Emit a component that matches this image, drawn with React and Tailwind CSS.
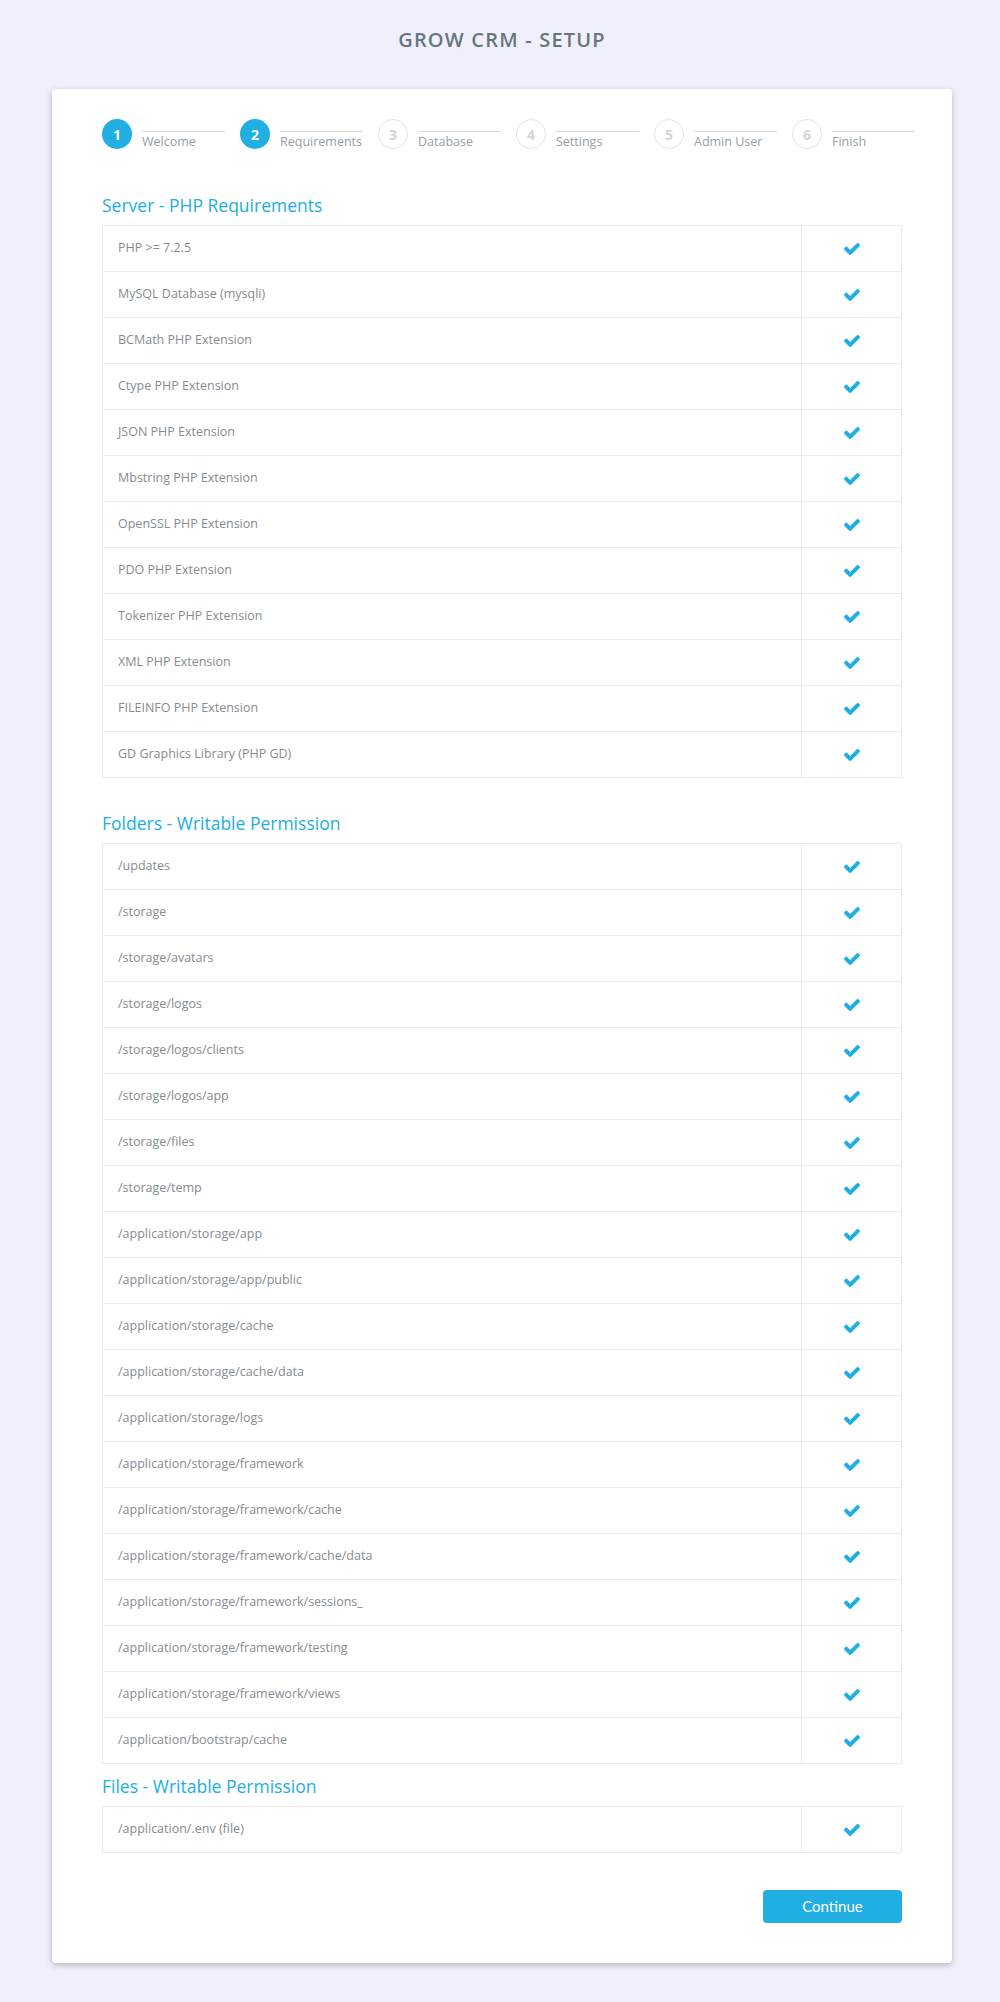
import React from 'react';

const steps = [
  { n: 1, label: 'Welcome', done: true },
  { n: 2, label: 'Requirements', done: true },
  { n: 3, label: 'Database' },
  { n: 4, label: 'Settings' },
  { n: 5, label: 'Admin User' },
  { n: 6, label: 'Finish' },
];

const serverReqs = [
  'PHP >= 7.2.5',
  'MySQL Database (mysqli)',
  'BCMath PHP Extension',
  'Ctype PHP Extension',
  'JSON PHP Extension',
  'Mbstring PHP Extension',
  'OpenSSL PHP Extension',
  'PDO PHP Extension',
  'Tokenizer PHP Extension',
  'XML PHP Extension',
  'FILEINFO PHP Extension',
  'GD Graphics Library (PHP GD)',
];

const folders = [
  '/updates',
  '/storage',
  '/storage/avatars',
  '/storage/logos',
  '/storage/logos/clients',
  '/storage/logos/app',
  '/storage/files',
  '/storage/temp',
  '/application/storage/app',
  '/application/storage/app/public',
  '/application/storage/cache',
  '/application/storage/cache/data',
  '/application/storage/logs',
  '/application/storage/framework',
  '/application/storage/framework/cache',
  '/application/storage/framework/cache/data',
  '/application/storage/framework/sessions_',
  '/application/storage/framework/testing',
  '/application/storage/framework/views',
  '/application/bootstrap/cache',
];

const files = ['/application/.env (file)'];

// font-awesome 4 style check mark
const Check = () => (
  <svg width="16" height="12" viewBox="121 400 1550 1060" fill="#20aee3">
    <path d="M1671 566q0 40-28 68l-724 724-136 136q-28 28-68 28t-68-28l-136-136-362-362q-28-28-28-68t28-68l136-136q28-28 68-28t68 28l294 295 656-657q28-28 68-28t68 28l136 136q28 28 28 68z" />
  </svg>
);

const Stepper = () => (
  <div className="flex h-[30px]">
    {steps.map((s) => (
      <div key={s.n} className="flex w-[138px] shrink-0">
        {s.done ? (
          <div className="w-[30px] h-[30px] rounded-full bg-[#20aee3] text-white text-[14px] font-bold flex items-center justify-center shrink-0">
            {s.n}
          </div>
        ) : (
          <div className="w-[30px] h-[30px] rounded-full border border-[#e3e3e3] bg-white text-[#d4d4d4] text-[14px] font-bold flex items-center justify-center shrink-0">
            {s.n}
          </div>
        )}
        <div className="ml-[10px] w-[83px] pt-[12px]">
          <div className="border-t border-[#d9d9d9]"></div>
          <div className="text-[12.5px] leading-[16px] text-[#939ea7] whitespace-nowrap mt-[2px]">{s.label}</div>
        </div>
      </div>
    ))}
  </div>
);

const CheckTable = ({ rows }) => (
  <div className="border-x border-b border-[#e9ebee]">
    {rows.map((r) => (
      <div key={r} className="flex h-[46px] border-t border-[#e9ebee]">
        <div className="flex-1 flex items-center pl-[15px] text-[12.5px] text-[#858b92]">{r}</div>
        <div className="w-[100px] border-l border-[#e9ebee] flex items-center justify-center">
          <Check />
        </div>
      </div>
    ))}
  </div>
);

const SectionTitle = ({ children, className = '' }) => (
  <h3 className={`text-[17.5px] leading-[28px] text-[#20aee3] mb-[6px] ${className}`}>{children}</h3>
);

export default function App() {
  return (
    <div className="min-h-[2002px] bg-[#f0f0fc] font-['Open_Sans',sans-serif] pt-[24px] pb-[39px]">
      <h1 className="text-center text-[20px] leading-[32px] font-semibold tracking-[1.2px] text-[#67757c] pl-[4px]">
        GROW CRM - SETUP
      </h1>
      <div className="ml-[52px] mt-[33px] w-[900px] bg-white rounded-[4px] shadow-[0_2px_6px_rgba(0,0,0,0.25)] px-[50px] pt-[30px] pb-[40px]">
        <Stepper />
        <SectionTitle className="mt-[42px]">Server - PHP Requirements</SectionTitle>
        <CheckTable rows={serverReqs} />
        <SectionTitle className="mt-[31px]">Folders - Writable Permission</SectionTitle>
        <CheckTable rows={folders} />
        <SectionTitle className="mt-[8px]">Files - Writable Permission</SectionTitle>
        <CheckTable rows={files} />
        <div className="flex justify-end mt-[37px]">
          <button className="w-[139px] h-[33px] rounded-[4px] bg-[#20aee3] text-white text-[15px] font-['Lato',sans-serif]">
            Continue
          </button>
        </div>
      </div>
    </div>
  );
}
